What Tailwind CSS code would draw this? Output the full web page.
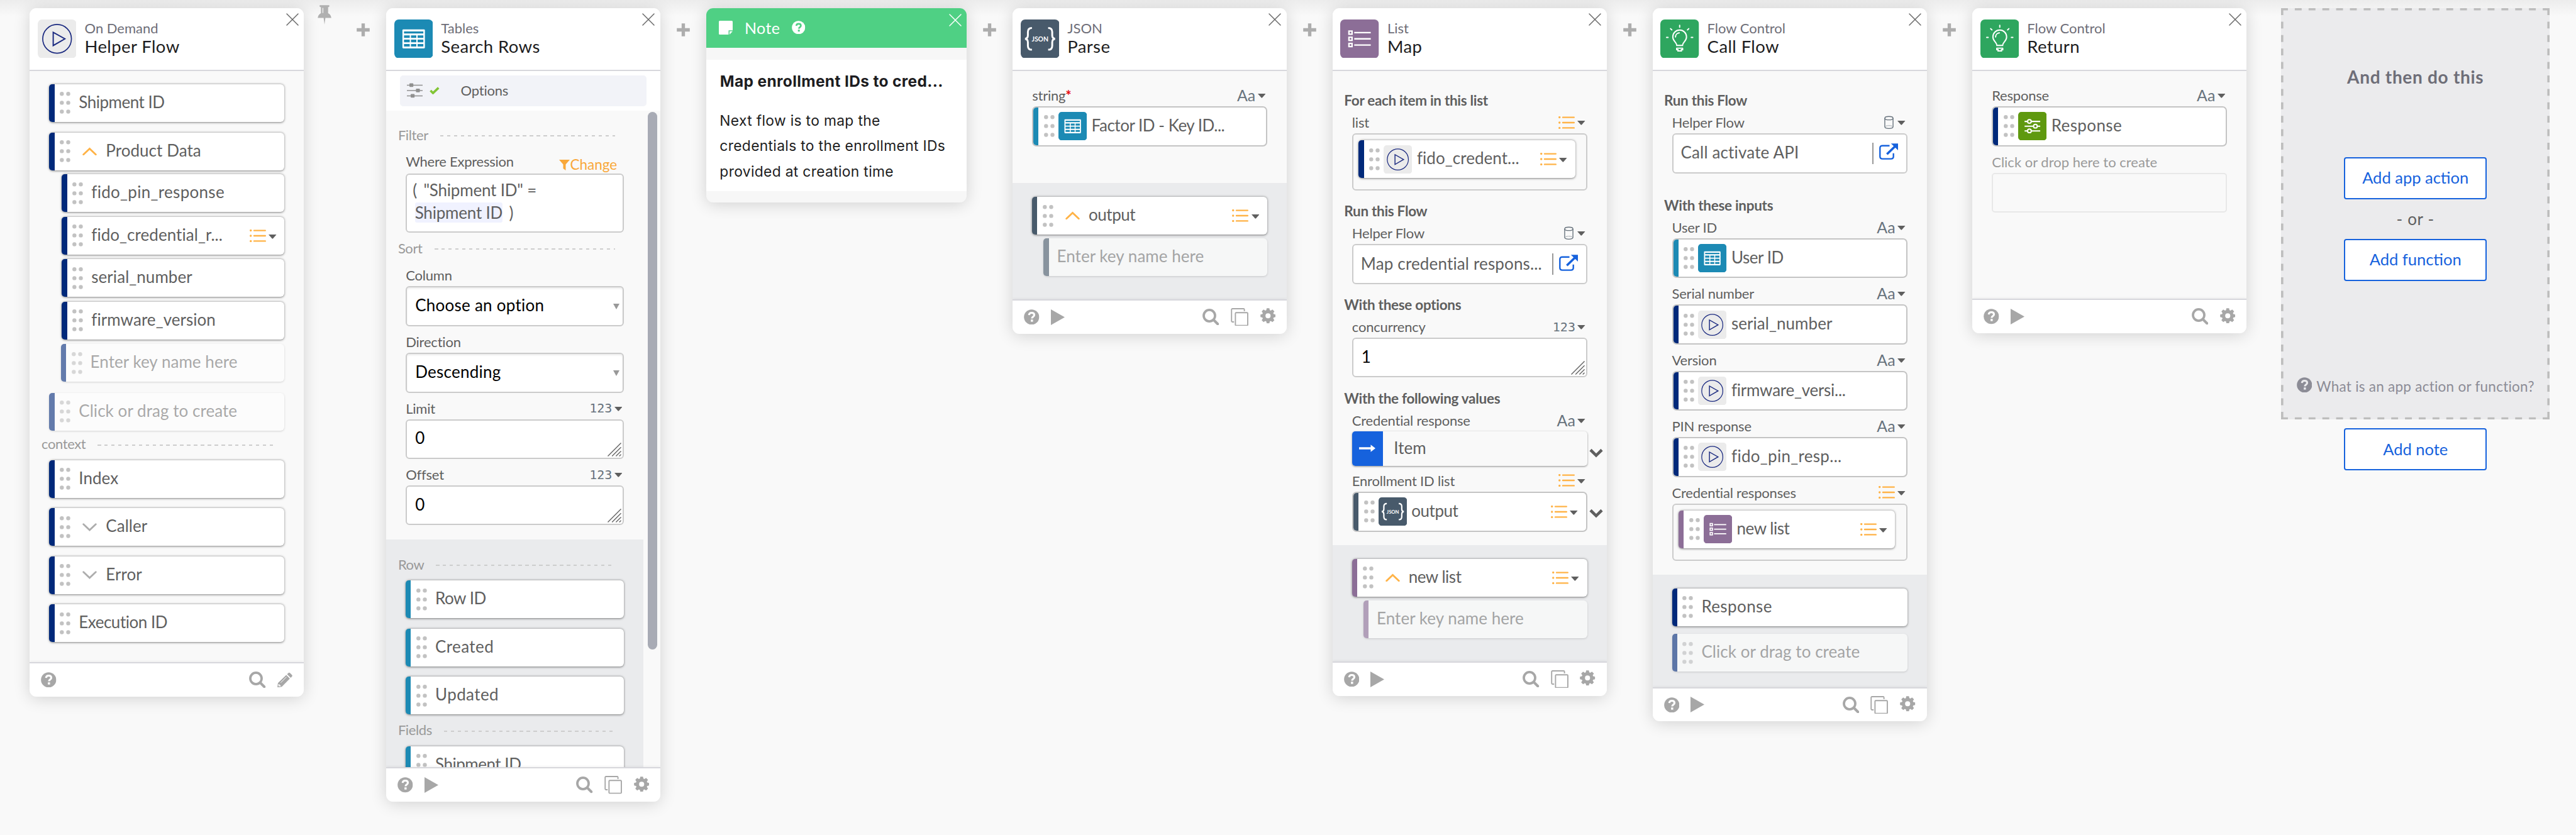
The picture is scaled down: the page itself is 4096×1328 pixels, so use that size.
<!DOCTYPE html>
<html lang="en">
<head>
<meta charset="utf-8">
<title>Helper Flow</title>
<script src="https://cdn.jsdelivr.net/npm/@tailwindcss/browser@4"></script>
</head>
<body class="bg-[#f9f9f9] w-[4096px] h-[1328px] overflow-hidden font-['Lato',sans-serif] text-[#5f5f5f]">

<svg class="hidden">
  <symbol id="close" viewBox="0 0 20 20"><path d="M1 1l18 18M19 1L1 19" stroke="currentColor" stroke-width="1.5" fill="none" stroke-linecap="round"/></symbol>
  <symbol id="dots" viewBox="0 0 17 35"><g fill="#c2c2c2"><circle cx="3.3" cy="3.3" r="3.2"/><circle cx="13.5" cy="3.3" r="3.2"/><circle cx="3.3" cy="17.4" r="3.2"/><circle cx="13.5" cy="17.4" r="3.2"/><circle cx="3.3" cy="31.5" r="3.2"/><circle cx="13.5" cy="31.5" r="3.2"/></g></symbol>
  <symbol id="lines" viewBox="0 0 26 20"><g stroke="#ffb347" stroke-width="2.4" stroke-linecap="round"><path d="M7 1.6h17.8M7 10h17.8M7 18.4h17.8"/></g><g fill="#ffb347"><circle cx="1.7" cy="1.6" r="1.7"/><circle cx="1.7" cy="10" r="1.7"/><circle cx="1.7" cy="18.4" r="1.7"/></g></symbol>
  <symbol id="caret" viewBox="0 0 13 7"><path d="M0 0h13L7.6 6.2q-1.1 1.1-2.2 0z" fill="#5f5f5f"/></symbol>
  <symbol id="up" viewBox="0 0 24 14"><path d="M1.8 12.2L12 2.6l10.2 9.6" fill="none" stroke="currentColor" stroke-width="3" stroke-linecap="round"/></symbol>
  <symbol id="down" viewBox="0 0 24 14"><path d="M1.8 1.8L12 11.4 22.2 1.8" fill="none" stroke="currentColor" stroke-width="3" stroke-linecap="round"/></symbol>
  <symbol id="fatdown" viewBox="0 0 22 15"><path d="M2 2.5l9 8.8 9-8.8" fill="none" stroke="#5f5f5f" stroke-width="4.6"/></symbol>
  <symbol id="help" viewBox="0 0 25 25"><circle cx="12.5" cy="12.5" r="12.3" fill="currentColor"/><path d="M8.3 9.3c.3-2.5 2-3.7 4.3-3.7 2.4 0 4.2 1.3 4.2 3.5 0 3-3.6 2.8-3.7 5.6" fill="none" stroke="var(--mark,#fff)" stroke-width="3.1"/><rect x="11.3" y="16.5" width="3.5" height="3.5" fill="var(--mark,#fff)"/></symbol>
  <symbol id="play" viewBox="0 0 22 25"><path d="M0 0l22 12.5L0 25z" fill="currentColor"/></symbol>
  <symbol id="search" viewBox="0 0 27 27"><circle cx="11.2" cy="11.2" r="9.2" fill="none" stroke="currentColor" stroke-width="3.8"/><path d="M18.3 18.3l6.4 6.4" stroke="currentColor" stroke-width="4.2" stroke-linecap="round"/></symbol>
  <symbol id="copy" viewBox="0 0 28 29"><g fill="none" stroke="currentColor" stroke-width="1.9"><path d="M5 22.2H2.4q-1.4 0-1.4-1.4V2.4Q1 1 2.4 1h17.8q1.4 0 1.4 1.4V5"/><rect x="7.2" y="7.3" width="19.8" height="20.6" rx="1.2"/></g></symbol>
  <symbol id="gear" viewBox="0 0 24 24"><path fill="currentColor" fill-rule="evenodd" d="M9.9.2h4.2l.6 3.1 1.6.7 2.6-1.8 3 3-1.8 2.6.7 1.6 3 .6v4l-3 .6-.7 1.6 1.8 2.6-3 3-2.6-1.8-1.6.7-.6 3.1H9.9l-.6-3.1-1.6-.7-2.6 1.8-3-3 1.8-2.6-.7-1.6-3-.6v-4l3-.6.7-1.6-1.8-2.6 3-3 2.6 1.8 1.6-.7zM12 8a4 4 0 100 8 4 4 0 000-8z"/></symbol>
  <symbol id="pencil" viewBox="0 0 25 25"><path fill="currentColor" d="M17.7 1.5q1.5-1.5 3 0l2.8 2.8q1.5 1.5 0 3L21.6 9.200l-5.800-5.800zM14.500 4.700l5.800 5.800L7.200 23.600 0 25l1-7.500z"/><path d="M15 7.600L5.500 17.100" stroke="#fff" stroke-width="1"/><path d="M2.600 19.500v2.600h2.800" stroke="#fff" stroke-width="1.600" fill="none"/></symbol>
  <symbol id="pin" viewBox="0 0 22 31"><path fill="#b0b0b0" d="M3 1.500Q3 .3 4.200.3h13.400q1.200 0 1.200 1.200T17.600 3.300h-.9V13q4.600 2.300 5.100 7.600H12.400L11 31l-1.400-10.400H.2Q.7 15.300 5.300 13V3.300h-1Q3 2.700 3 1.500z"/><path d="M8.400 4.500v8.200" stroke="#f4f4f4" stroke-width="1.300"/></symbol>
  <symbol id="plus" viewBox="0 0 22 22"><path d="M11 3v16M3 11h16" stroke="#adadad" stroke-width="5.600" stroke-linecap="square"/></symbol>
  <symbol id="sliders" viewBox="0 0 25 24"><g fill="#909090"><path d="M0 2.700h25v1.500H0zM0 11.200h25v1.500H0zM0 19.700h25v1.500H0z"/><rect x="4" y=".6" width="6.200" height="5.600" rx="1"/><rect x="14.400" y="9.100" width="6.200" height="5.600" rx="1"/><rect x="6" y="17.600" width="6.200" height="5.600" rx="1"/></g></symbol>
  <symbol id="check" viewBox="0 0 16 12"><path d="M1.500 6l4 4L14.300 1.600" fill="none" stroke="#82c536" stroke-width="3.600"/></symbol>
  <symbol id="funnel" viewBox="0 0 17 17"><path d="M0 0h17L10.500 7.500V17L6.500 14V7.500z" fill="#f9a83b"/></symbol>
  <symbol id="grip" viewBox="0 0 23 23"><path d="M.5 22.500L22.500.5M7.500 22.500l15-15M14 22.500l8.500-8.500M19.500 22.500l3-3" stroke="#666" stroke-width="1.500"/></symbol>
  <symbol id="drum" viewBox="0 0 16 22"><g fill="none" stroke="#68737d" stroke-width="1.500"><ellipse cx="8" cy="3.700" rx="7" ry="2.900"/><path d="M1 3.700v14.600c0 3.900 14 3.900 14 0V3.700"/><path d="M1.500 18.300c1.500-2.600 11.500-2.600 13 0" stroke-width="1" stroke-dasharray="1.500 1"/></g></symbol>
  <symbol id="open" viewBox="0 0 30 26"><g fill="none" stroke="#1662dd"><path d="M16.500 3.700H5.200Q1.300 3.700 1.300 7.400v13.600q0 3.600 3.900 3.600h13.600q3.900 0 3.900-3.600v-5.300" stroke-width="2.400"/><path d="M12.300 17.300L25 5" stroke-width="3.600"/></g><path d="M18.800.3H30V11z" fill="#1662dd"/></symbol>
  <symbol id="arrow" viewBox="0 0 26 12"><path d="M0 4.300h18.500V.3L26 6l-7.500 5.700v-4H0z" fill="#fff"/></symbol>
  <symbol id="note" viewBox="0 0 22 22"><path d="M1.500 0h19Q22 0 22 1.500V15.200h-6.500V22h-14Q0 22 0 20.500v-19Q0 0 1.500 0z" fill="#fff"/><path d="M17 22v-5.300h5z" fill="#fff"/></symbol>

  <symbol id="app-play" viewBox="0 0 62 62"><rect width="62" height="62" rx="7" fill="#ebebeb"/><g fill="none" stroke="#1b2a80" stroke-width="1.700"><circle cx="31" cy="31" r="23"/><path d="M24.800 20.500v21.300L43.500 31z" stroke-width="2"/></g></symbol>
  <symbol id="app-table" viewBox="0 0 62 62"><rect width="62" height="62" rx="7" fill="#1c8ab4"/><rect x="13" y="16" width="36" height="30.400" rx="1.500" fill="#fff"/><g fill="#1c8ab4"><path d="M15.500 19.200h31v3.200h-31zM15.500 25.400h9.200v4.200h-9.200zM26.700 25.400h8.600v4.200h-8.600zM37.300 25.400h9.200v4.200h-9.200zM15.500 32.300h9.200v4.200h-9.200zM26.700 32.300h8.600v4.200h-8.600zM37.300 32.300h9.200v4.200h-9.200zM15.500 39.200h9.200v4.200h-9.200zM26.700 39.200h8.600v4.200h-8.600zM37.300 39.200h9.200v4.200h-9.200z"/></g></symbol>
  <symbol id="app-json" viewBox="0 0 62 62"><rect width="62" height="62" rx="7" fill="#485a6b"/><g fill="none" stroke="#fff" stroke-width="3"><path d="M18 13.500q-6.500 0-6.500 6.500v5.500q0 5-4.500 5.500 4.500.5 4.500 5.500V42q0 6.500 6.500 6.500M44 13.500q6.500 0 6.500 6.500v5.500q0 5 4.500 5.500-4.500.5-4.500 5.500V42q0 6.500-6.500 6.500"/></g><text x="31" y="35" text-anchor="middle" font-family="Lato" font-weight="700" font-size="10.500" fill="#fff">JSON</text></symbol>
  <symbol id="app-list" viewBox="0 0 62 62"><rect width="62" height="62" rx="7" fill="#8c6e97"/><g fill="none" stroke="#fff" stroke-width="2.300"><rect x="14" y="18.600" width="5" height="5"/><rect x="14" y="28.500" width="5" height="5"/><rect x="14" y="38.400" width="5" height="5"/><path d="M22.500 21.100H49M22.500 31H49M22.500 40.900H49"/></g></symbol>
  <symbol id="app-bulb" viewBox="0 0 62 62"><rect width="62" height="62" rx="7" fill="#2ea65f"/><g fill="none" stroke="#fff" stroke-width="2" stroke-linecap="round"><path d="M26.400 41.500c0-5-6.400-6.500-6.400-13.500a11 11 0 0122 0c0 7-6.400 8.500-6.400 13.500z"/><path d="M24.300 28a6.600 6.600 0 016-6.500"/><path d="M26.200 46h9.600M26.200 46v2.500h2v2h5.600v-2h2V46"/><path d="M31 9.300v3M16.400 14.700l2 2M45.600 14.700l-2 2M10 28.700h2.400M49.600 28.700H52"/></g></symbol>
  <symbol id="app-sliders" viewBox="0 0 62 62"><rect width="62" height="62" rx="7" fill="#5f990f"/><g fill="#5f990f" stroke="#fff" stroke-width="2.800"><path d="M14 20.700h34M14 31h34M14 41.300h34"/><circle cx="24.500" cy="20.700" r="4"/><circle cx="37.500" cy="31" r="4"/><circle cx="24.500" cy="41.300" r="4"/></g></symbol>
</svg>

<div class="absolute inset-x-0 top-0 h-[26px] bg-linear-to-b from-[#ececec] to-[#f9f9f9]"></div>
<main id="board" class="relative flex items-start pt-[12.5px] pl-[47.4px]"></main>

<script>
const ic = (id, cls) => `<svg class="shrink-0 ${cls}"><use href="#${id}"/></svg>`;
const NAVY = 'bg-[#00297a]', TEAL = 'bg-[#1c8ab4]', SLATE = 'bg-[#485a6b]', PLUM = 'bg-[#8c6e97]';

const track = (t) => /ID|output|list/.test(t) ? 'tracking-[-0.480px]' : /pin/.test(t) ? 'tracking-[0.300px]' : /Response|ated/.test(t) ? 'tracking-[0.400px]' : /versi\./.test(t) ? 'tracking-[-0.250px]' : 'tracking-[0.050px]';

const menu = `<span class="ml-auto mr-[12.8px] flex items-center gap-[4.3px]">${ic('lines','w-[26px] h-[20px]')}${ic('caret','w-[12.6px] h-[7px] mt-[3px]')}</span>`;
const inner = (o) => `
  <span class="w-[8.2px] self-stretch shrink-0 rounded-l-[5px] ${o.bar}"></span>
  ${o.nodots ? '' : ic('dots','ml-[8.7px] w-[17px] h-[35px]')}
  ${o.chev ? ic(o.chev, 'ml-[19px] w-[23px] h-[13.500px] mr-[1px] ' + (o.chev === 'up' ? 'text-[#ffb347]' : 'text-[#adadad]')) : ''}
  ${o.icon ? ic(o.icon,'ml-[6px] w-[45.300px] h-[45.300px]') : ''}
  <span class="whitespace-nowrap pb-[3px] text-[26px] ${track(o.t)} ${o.icon ? 'ml-[7.300px]' : 'ml-[13px]'}">${o.t}</span>
  ${o.menu ? menu : ''}`;
const chip = (t, bar, cls, o = {}) => `
  <div class="flex h-[60px] items-center rounded-[6px] bg-white ${o.ghost ? 'opacity-60 text-[#757575] shadow-[0_1px_3px_rgba(0,0,0,.25)]' : 'shadow-[0_0.500px_3.500px_rgba(0,0,0,.5)]'} ${cls}">${inner({t, bar, ...o})}</div>`;
const slot = (t, bar, icon, o = {}) => `
  <div class="flex h-[63.600px] items-center rounded-[7px] border-2 border-[#c4c4c4] bg-white">${inner({t, bar, icon, ...o})}</div>`;
const nest = (t, bar, icon) => `
  <div class="h-[91px] rounded-[6px] border-2 border-[#cbcbcb] pt-[9px] pl-[8.600px]">${chip(t, bar, 'w-[344.200px]', {icon, menu:true})}</div>`;

const KIND = {
  Aa: `<span class="text-[25px] leading-none text-[#68737d]">Aa</span>`,
  num: `<span class="font-['DejaVu_Sans_Mono',monospace] text-[20px] leading-none text-[#68737d]">123</span>`,
  list: ic('lines','w-[26px] h-[20px] mr-[1px]'),
  drum: ic('drum','w-[15px] h-[21.500px] mr-[2.500px]'),
};
const label = (t, kind, cls) => `
  <div class="flex h-[35px] items-center justify-between pr-[3px] ${cls || ''}">
    <span class="text-[22px] tracking-[-0.200px]">${t}</span>
    ${kind ? `<span class="flex items-center gap-[3.300px]">${KIND[kind]}${ic('caret','w-[12.600px] h-[7px] mt-[2px]')}</span>` : ''}
  </div>`;
const heading = (t, cls) => `<div class="-ml-[12.500px] flex h-[34.500px] items-center text-[22.500px] font-bold tracking-[-0.300px] ${cls}">${t}</div>`;
const section = (t, w, cls) => `
  <div class="-ml-[12.300px] flex h-[47px] items-center pb-[5px] ${w} ${cls || ''}">
    <span class="text-[22px] tracking-[-0.400px] text-[#999]">${t}</span>
    <span class="ml-[19px] mt-[4px] h-[2px] flex-1 bg-[repeating-linear-gradient(90deg,#cdcdcd_0_5.500px,transparent_5.500px_10.950px)]"></span>
  </div>`;
const select = (t) => `
  <div class="flex h-[63.400px] items-center justify-between rounded-[6px] border-2 border-[#cbcbcb] bg-white pl-[13px] pr-[5.500px] shadow-[inset_0_2px_3px_rgba(0,0,0,.08)]">
    <span class="pb-[2px] text-[26px] tracking-[0.250px] text-black">${t}</span>
    <svg class="mt-[2px] h-[9px] w-[10px]" viewBox="0 0 10 9"><path d="M0 0h10L5 9z" fill="#999"/></svg>
  </div>`;
const area = (t) => `
  <div class="flex h-[63px] items-center justify-between rounded-[6px] border-2 border-[#cbcbcb] bg-white pl-[13px] pr-[2px]">
    <span class="pb-[3px] text-[26px] text-black">${t}</span>
    ${ic('grip','w-[22px] h-[22px] self-end mb-[2px]')}
  </div>`;
const link = (t) => `
  <div class="flex h-[63.600px] items-center rounded-[6px] border-2 border-[#cbcbcb] bg-white pl-[12px]">
    <span class="whitespace-nowrap pb-[2px] text-[26px] tracking-[0.150px]">${t}</span>
    <span class="ml-auto h-[34px] w-[2px] bg-[#999]"></span>
    ${ic('open','w-[30px] h-[26px] ml-[9px] mr-[12.500px] mb-[5px]')}
  </div>`;

const card = (h, icon, app, name, body, tools, strip = '') => `
  <section class="flex w-[436px] shrink-0 flex-col overflow-hidden rounded-[11px] bg-[#f9f9f9] shadow-[0_3px_26px_rgba(0,0,0,.16)] ${h}">
    <header class="flex h-[100px] shrink-0 border-b-2 border-[#d7d7dc] bg-white pl-[12.600px] pt-[18.400px]">
      ${ic(icon,'w-[61.500px] h-[61.500px]')}
      <div class="ml-[13px] flex-1 pt-[1px]">
        <div class="text-[22px] leading-[26px] text-[#6e6e78]">${app}</div>
        <div class="text-[27.500px] leading-[31px] tracking-[0.400px] text-[#1d1d21]">${name}</div>
      </div>
      ${ic('close','w-[20px] h-[20px] mr-[8.700px] -mt-[9.600px] text-[#6a6a6a]')}
    </header>
    ${strip}
    ${body}
    <footer class="z-10 flex h-[54.800px] shrink-0 items-center border-t-2 border-[#d7d7dc] bg-white px-[18px] text-[#a7a7a7] shadow-[0_-1px_4px_rgba(0,0,0,.06)]">${tools}</footer>
  </section>`;
const col = (content, out) => `<div class="flex-1"><div class="ml-[31px] w-[374px]">${content}</div></div>` +
  (out ? `<div class="bg-[#eaebed] pl-[31px] pr-[31px] ${out[0]}">${out[1]}</div>` : '');

const help = ic('help','w-[24.600px] h-[24.600px]'), search = ic('search','w-[26.500px] h-[26.500px]');
const run = help + ic('play','w-[22px] h-[25px] ml-[18px]') + `<span class="flex-1"></span>` + search;
const gear = ic('gear','w-[24.500px] h-[24.500px] ml-[18.600px] mb-[3px]');
const tools = run + ic('copy','w-[28.200px] h-[28.700px] ml-[18px]') + gear;
const plus = `<div class="flex w-[72.700px] shrink-0 justify-center pt-[24.500px]">${ic('plus','w-[21px] h-[21px]')}</div>`;
const btn = (t, cls) => `<button class="flex h-[67px] w-[227px] items-center justify-center rounded-[4px] border-2 border-[#1662dd] bg-white pb-[2px] text-[25.500px] text-[#1662dd] ${cls}">${t}</button>`;

const helper = card('h-[1095px]', 'app-play', 'On Demand', 'Helper Flow', col(
  chip('Shipment ID', NAVY, 'mt-[21.400px]') +
  chip('Product Data', NAVY, 'mt-[16.800px]', {chev:'up'}) +
  chip('fido_pin_response', NAVY, 'mt-[6.500px] ml-[20px]') +
  chip('fido_credential_r...', NAVY, 'mt-[7.500px] ml-[20px]', {menu:true}) +
  chip('serial_number', NAVY, 'mt-[7.500px] ml-[20px]') +
  chip('firmware_version', NAVY, 'mt-[7.500px] ml-[20px]') +
  chip('Enter key name here', NAVY, 'mt-[7.500px] ml-[18.300px]', {ghost:true}) +
  chip('Click or drag to create', NAVY, 'mt-[17.700px]', {ghost:true}) +
  section('context', 'w-[371.500px]') +
  chip('Index', NAVY, '') +
  chip('Caller', NAVY, 'mt-[16.500px]', {chev:'down'}) +
  chip('Error', NAVY, 'mt-[16.500px]', {chev:'down'}) +
  chip('Execution ID', NAVY, 'mt-[16.500px]')),
  help + `<span class="flex-1"></span>` + search + ic('pencil','w-[24.500px] h-[24.500px] ml-[18px]'));

const options = `
  <div class="h-[63.100px] shrink-0 bg-white px-[22px] pt-[7.200px]">
    <div class="flex h-[49.300px] items-center rounded-[5px] bg-[#f2f3f8] pl-[10.400px]">
      ${ic('sliders','w-[25px] h-[24px]')}${ic('check','w-[16px] h-[12px] ml-[11px]')}
      <span class="ml-[34px] pb-[2px] text-[22px] tracking-[-0.200px]">Options</span>
    </div>
  </div>`;
const rows = card('h-[1262.400px]', 'app-table', 'Tables', 'Search Rows', `
  <div class="flex min-h-0 flex-1 overflow-hidden">
    <div class="w-[409px] shrink-0">
      <div class="ml-[31px] w-[347px]">
        ${section('Filter', 'w-[344.700px]', 'mt-[17.900px]')}
        <div class="flex h-[35.700px] items-start justify-between pr-[11px]">
          <span class="text-[22px] tracking-[-0.250px]">Where Expression</span>
          <span class="flex items-center pt-[5px] text-[22.500px] text-[#f9a83b]">${ic('funnel','w-[17px] h-[17px]')}Change</span>
        </div>
        <div class="h-[94.300px] whitespace-pre rounded-[6px] border-2 border-[#cbcbcb] bg-white pl-[9px] pt-[6px] text-[26px] leading-[36.300px] tracking-[-0.200px]"><span class="mr-[4px]">(</span> "Shipment ID" =
<span class="ml-[3.500px] mr-[4px] rounded-[3px] bg-[#f0f2ff]">Shipment ID</span> )</div>
        ${section('Sort', 'w-[344.700px]', 'mt-[2.800px]')}
        ${label('Column', '')}${select('Choose an option')}
        ${label('Direction', '', 'mt-[7.500px]')}${select('Descending')}
        ${label('Limit', 'num', 'mt-[7.300px]')}${area('0')}
        ${label('Offset', 'num', 'mt-[7.500px]')}${area('0')}
      </div>
      <div class="mt-[22.700px] bg-[#eaebed] pl-[31px] pt-[18.200px] pr-[31px]">
        <div>
          ${section('Row', 'w-[344.700px]')}
          ${chip('Row ID', TEAL, 'w-[347px]')}
          ${chip('Created', TEAL, 'w-[347px] mt-[16.400px]')}
          ${chip('Updated', TEAL, 'w-[347px] mt-[16.400px]')}
          ${section('Fields', 'w-[344.700px]', 'mt-[3.700px]')}
          ${chip('Shipment ID', TEAL, 'w-[347px]')}
        </div>
      </div>
    </div>
    <div class="ml-[7.200px] mt-[2.400px] h-[855px] w-[14.600px] rounded-full bg-[#a8abb5]"></div>
  </div>`, tools, options);

const note = `
  <section class="w-[414.600px] shrink-0 overflow-hidden rounded-[11px] bg-[#f7f7f7] pb-[18px] shadow-[0_3px_26px_rgba(0,0,0,.16)]">
    <header class="flex h-[63.600px] items-center bg-[#4fd084] pl-[20.600px] text-white">
      ${ic('note','w-[22px] h-[22px]')}
      <span class="ml-[18.500px] text-[25px] tracking-[0.400px]">Note</span>
      ${ic('help','w-[21.500px] h-[21.500px] ml-[19px] mb-[2px] [--mark:#4fd084]')}
      ${ic('close','w-[20px] h-[20px] ml-auto mr-[8.700px] mt-[9px] self-start')}
    </header>
    <div class="mt-[18.500px] h-[209px] bg-white pl-[21.500px] pt-[19px] font-['Inter',sans-serif] text-[#1d1d21]">
      <div class="ml-[0.500px] whitespace-nowrap text-[24.500px] font-bold leading-[30px] tracking-[0.350px]">Map enrollment IDs to cred...</div>
      <div class="mt-[28.500px] whitespace-pre text-[22.800px] leading-[40.300px] tracking-[0.330px]">Next flow is to map the
credentials to the enrollment IDs
provided at creation time</div>
    </div>
  </section>`;

const parse = card('h-[518px]', 'app-json', 'JSON', 'Parse', col(
  label('string<span class="font-bold text-red-600">*</span>', 'Aa', 'mt-[21.500px]') + slot('Factor ID - Key ID...', TEAL, 'app-table'),
  ['h-[184.500px] pt-[21.900px]', chip('output', SLATE, '', {chev:'up', menu:true}) + chip('Enter key name here', SLATE, 'mt-[6.200px] ml-[18.200px]', {ghost:true, nodots:true})]), tools);

const over = (content) => `<div class="relative">${content}${ic('fatdown','absolute -right-[25px] top-[27px] w-[22px] h-[15px]')}</div>`;
const map = card('h-[1094px]', 'app-list', 'List', 'Map', col(
  heading('For each item in this list', 'mt-[30.200px]') + label('list', 'list') + nest('fido_credent...', NAVY, 'app-play') +
  heading('Run this Flow', 'mt-[15.700px]') + label('Helper Flow', 'drum') + link('Map credential respons...') +
  heading('With these options', 'mt-[15.700px]') + label('concurrency', 'num') + area('1') +
  heading('With the following values', 'mt-[16.400px]') + label('Credential response', 'Aa') +
  over(`<div class="flex h-[54.500px] items-center overflow-hidden rounded-[5px] shadow-[0_1px_3px_rgba(0,0,0,.45)] bg-[#f9f9f9]">
    <span class="flex w-[49px] self-stretch items-center justify-center bg-[#1662dd]">${ic('arrow','w-[26px] h-[12px]')}</span>
    <span class="ml-[17.500px] pb-[2px] text-[26px]">Item</span></div>`) +
  label('Enrollment ID list', 'list', 'mt-[6.400px]') + over(slot('output', SLATE, 'app-json', {menu:true})),
  ['h-[185px] pt-[21.800px]', chip('new list', PLUM, '', {chev:'up', menu:true}) + chip('Enter key name here', PLUM, 'mt-[6.100px] ml-[18px]', {ghost:true, nodots:true})]), tools);

const call = card('h-[1134.800px]', 'app-bulb', 'Flow Control', 'Call Flow', col(
  heading('Run this Flow', 'mt-[30.200px]') + label('Helper Flow', 'drum') + link('Call activate API') +
  heading('With these inputs', 'mt-[33.500px]') + label('User ID', 'Aa') + slot('User ID', TEAL, 'app-table') +
  label('Serial number', 'Aa', 'mt-[7px]') + slot('serial_number', NAVY, 'app-play') +
  label('Version', 'Aa', 'mt-[6.800px]') + slot('firmware_versi...', NAVY, 'app-play') +
  label('PIN response', 'Aa', 'mt-[6.800px]') + slot('fido_pin_resp...', NAVY, 'app-play') +
  label('Credential responses', 'list', 'mt-[6.800px]') + nest('new list', PLUM, 'app-list'),
  ['h-[178.800px] pt-[21.800px]', chip('Response', NAVY, '') + chip('Click or drag to create', NAVY, 'mt-[12.600px]', {ghost:true})]), tools);

const ret = card('h-[517.500px]', 'app-bulb', 'Flow Control', 'Return', col(
  label('Response', 'Aa', 'mt-[21.500px]') + slot('Response', NAVY, 'app-sliders') +
  `<div class="mt-[7px] flex h-[35px] items-center text-[22px] text-[#9a9a9a]">Click or drop here to create</div>
   <div class="h-[63px] rounded-[5px] border-2 border-[#e8e8e8]"></div>`), run + gear);

const next = `
  <div class="ml-[55px] flex w-[427px] shrink-0 flex-col items-center">
    <div class="relative flex h-[654.300px] w-full flex-col items-center rounded-[4px] bg-[#ebebed]">
      <svg class="absolute inset-0 h-full w-full" fill="none" stroke="#bdbdbd" stroke-width="3.600">
        <path d="M0 1.800h427M0 652.500h427" stroke-dasharray="10.900 11"/>
        <path d="M1.800 0v654.300M425.200 0v654.300" stroke-dasharray="10.900 10.500"/>
      </svg>
      <div class="mt-[91px] text-[28px] font-bold leading-[36px] tracking-[0.700px] text-[#6e6e78]">And then do this</div>
      ${btn('Add app action', 'mt-[110px]')}
      <div class="flex h-[63px] items-center text-[26px] tracking-[0.700px]">- or -</div>
      ${btn('Add function', '')}
      <div class="mt-[150px] flex items-center gap-[7px] whitespace-nowrap text-[22.500px] leading-[36px] tracking-[0.250px] text-[#8c8c96]">${ic('help','w-[24.600px] h-[24.600px] mb-[5px] [--mark:#ebebed]')}What is an app action or function?</div>
    </div>
    ${btn('Add note', 'mt-[14.600px]')}
  </div>`;

const pin = `<div class="w-[58.100px] shrink-0 pl-[22px]">${ic('pin','w-[22px] h-[31px] -mt-[5px]')}</div>`;
document.getElementById('board').innerHTML =
  helper + pin + plus + rows + plus + note + plus + parse + plus + map + plus + call + plus + ret + next;
</script>
</body>
</html>
